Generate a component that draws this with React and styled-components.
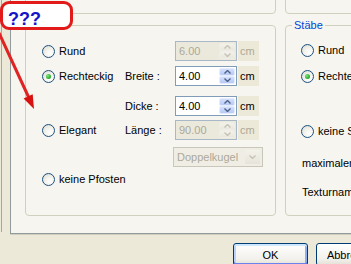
import React from "react";
import styled, { createGlobalStyle } from "styled-components";

const GlobalStyle = createGlobalStyle`
  html, body {
    margin: 0;
    padding: 0;
    background: #ece9d8;
  }
  body {
    font-family: "Liberation Sans", Arial, sans-serif;
    font-size: 11px;
    color: #000;
  }
`;

const PANEL = "#f6f5f0";

const Screen = styled.div`
  position: relative;
  width: 351px;
  height: 264px;
  overflow: hidden;
  background: #ece9d8;
`;

const Body = styled.div`
  display: flex;
  height: 234px;
`;

const SideEdge = styled.div`
  flex: none;
  width: 1px;
  height: 232px;
  border-right: 1px solid #a8a696;
  margin-right: 8px;
`;

const TabPage = styled.div`
  flex: 0 0 420px;
  box-sizing: border-box;
  height: 234px;
  padding-left: 14px;
  background: ${PANEL};
  border-left: 1px solid #919b9c;
  border-bottom: 1px solid #919b9c;
  box-shadow: 0 1px 0 #d0cebf;
  display: flex;
  flex-direction: column;
`;

const BoxRow = styled.div`
  display: flex;
  gap: 9px;
  margin-top: ${(p) => p.$top}px;
  height: ${(p) => p.$height}px;
  flex: none;
`;

const GroupBox = styled.div`
  box-sizing: border-box;
  width: ${(p) => p.$width}px;
  height: 100%;
  border: 1px solid #d0d0bf;
  border-radius: 4px;
  padding-left: ${(p) => p.$padLeft || 0}px;
  flex: none;
`;

const GroupTitle = styled.span`
  display: block;
  width: fit-content;
  margin: -7px 0 0 ${(p) => 6 - (p.$padLeft || 0)}px;
  padding: 0 2px;
  line-height: 13px;
  background: ${PANEL};
  color: #0046d5;
`;

const Row = styled.div`
  display: flex;
  align-items: center;
  height: 22px;
  margin-top: ${(p) => p.$top || 0}px;
  white-space: nowrap;
`;

const RadioCell = styled.label`
  display: flex;
  align-items: center;
  gap: 4px;
  width: ${(p) => (p.$width ? `${p.$width}px` : "auto")};
  flex: none;
`;

const RadioCircle = styled.span`
  box-sizing: border-box;
  width: 13px;
  height: 13px;
  flex: none;
  border: 1px solid #1c5180;
  border-radius: 50%;
  background: radial-gradient(circle at 65% 70%, #ffffff 0%, #f3f2ec 45%, #d6d5cc 100%);
  display: inline-flex;
  align-items: center;
  justify-content: center;

  &::after {
    content: "";
    display: ${(p) => (p.$checked ? "block" : "none")};
    width: 5px;
    height: 5px;
    border-radius: 50%;
    background: radial-gradient(circle at 35% 35%, #7ae87a, #21a121 75%);
  }
`;

const FieldLabel = styled.span`
  width: 50px;
  flex: none;
`;

const Spinner = styled.div`
  box-sizing: border-box;
  width: 62px;
  height: 20px;
  flex: none;
  display: flex;
  align-items: stretch;
  border: 1px solid ${(p) => (p.$disabled ? "#a9b8c9" : "#7f9db9")};
  background: ${(p) => (p.$disabled ? "#ebe9dc" : "#fff")};
  color: ${(p) => (p.$disabled ? "#aca899" : "#000")};
`;

const SpinValue = styled.span`
  flex: 1;
  padding-left: 3px;
  line-height: 18px;
`;

const SpinButtons = styled.div`
  width: 16px;
  display: flex;
  flex-direction: column;
  padding: 1px 1px 1px 0;
`;

const SpinHalf = styled.div`
  flex: 1;
  display: flex;
  align-items: center;
  justify-content: center;
  border-radius: 2px;
  border: 1px solid ${(p) => (p.$disabled ? "#efeee6" : "#e4ecfd")};
  background: ${(p) =>
    p.$disabled
      ? "linear-gradient(#f3f2ea, #e9e7dd)"
      : "linear-gradient(#d3dffc, #b7caf5)"};
`;

const Unit = styled.span`
  box-sizing: border-box;
  width: 21px;
  height: 20px;
  margin-left: 1px;
  padding-left: 2px;
  line-height: 20px;
  background: #ece9d8;
  color: ${(p) => (p.$disabled ? "#aca899" : "#000")};
`;

const Combo = styled.div`
  box-sizing: border-box;
  width: 90px;
  height: 20px;
  margin-left: -2px;
  display: flex;
  align-items: stretch;
  border: 1px solid #c9c7ba;
  background: #f0eee4;
  color: #aca899;
`;

const ComboText = styled.span`
  flex: 1;
  padding-left: 3px;
  line-height: 18px;
`;

const ComboButton = styled.div`
  width: 15px;
  margin: 1px;
  display: flex;
  align-items: center;
  justify-content: center;
  border-radius: 2px;
  border: 1px solid #efeee6;
  background: linear-gradient(#f3f2ea, #e6e4da);
`;

const Spacer = styled.span`
  width: ${(p) => p.$width}px;
  flex: none;
`;

const PlainText = styled.span`
  padding-left: 1px;
`;

const ButtonBar = styled.div`
  display: flex;
  gap: 8px;
  padding: 9px 0 0 233px;
`;

const Button = styled.button`
  box-sizing: border-box;
  width: 75px;
  height: 23px;
  flex: none;
  font-family: inherit;
  font-size: 11px;
  color: #000;
  border: 1px solid #003c74;
  border-radius: 3px;
  background: linear-gradient(#ffffff, #f2f1ec 70%, #e3e0d6);
  box-shadow: ${(p) =>
    p.$default
      ? "inset 0 2px 0 #cee7ff, inset 0 -2px 0 #6982ee, inset 2px 0 0 #b8d3fb, inset -2px 0 0 #8bb0f3"
      : "none"};
  padding: 0;
`;

const Callout = styled.div`
  position: absolute;
  left: 0;
  top: 1px;
  box-sizing: border-box;
  width: 73px;
  height: 29px;
  padding: 5px 0 0 5px;
  border: 3px solid #e21a1a;
  border-radius: 9px;
  background: #fff;
  font-weight: bold;
  font-size: 18px;
  line-height: 20px;
  color: #1414c8;
`;

const ArrowLayer = styled.svg`
  position: absolute;
  left: 0;
  top: 0;
`;

const Chevron = ({ up, disabled }) => (
  <svg width="7" height="4" viewBox="0 0 7 4">
    <path
      d={up ? "M0.5 3.5 L3.5 0.5 L6.5 3.5" : "M0.5 0.5 L3.5 3.5 L6.5 0.5"}
      fill="none"
      stroke={disabled ? "#c5c3b6" : "#4d6185"}
      strokeWidth="1.4"
    />
  </svg>
);

const SpinField = ({ value, disabled }) => (
  <>
    <Spinner $disabled={disabled}>
      <SpinValue>{value}</SpinValue>
      <SpinButtons>
        <SpinHalf $disabled={disabled}>
          <Chevron up disabled={disabled} />
        </SpinHalf>
        <SpinHalf $disabled={disabled}>
          <Chevron disabled={disabled} />
        </SpinHalf>
      </SpinButtons>
    </Spinner>
    <Unit $disabled={disabled}>cm</Unit>
  </>
);

const Radio = ({ label, checked, width }) => (
  <RadioCell $width={width}>
    <RadioCircle $checked={checked} />
    {label}
  </RadioCell>
);

export default function App() {
  return (
    <Screen>
      <GlobalStyle />
      <Body>
        <SideEdge />
        <TabPage>
          <BoxRow $top={-27} $height={41}>
            <GroupBox $width={251} />
            <GroupBox $width={150} />
          </BoxRow>
          <BoxRow $top={11} $height={191}>
            <GroupBox $width={251} $padLeft={16}>
              <Row $top={14}>
                <Radio label="Rund" width={83} />
                <Spacer $width={50} />
                <SpinField value="6.00" disabled />
              </Row>
              <Row $top={3}>
                <Radio label="Rechteckig" checked width={83} />
                <FieldLabel>Breite :</FieldLabel>
                <SpinField value="4.00" />
              </Row>
              <Row $top={8}>
                <Spacer $width={83} />
                <FieldLabel>Dicke :</FieldLabel>
                <SpinField value="4.00" />
              </Row>
              <Row $top={2}>
                <Radio label="Elegant" width={83} />
                <FieldLabel>Länge :</FieldLabel>
                <SpinField value="90.00" disabled />
              </Row>
              <Row $top={5}>
                <Spacer $width={133} />
                <Combo>
                  <ComboText>Doppelkugel</ComboText>
                  <ComboButton>
                    <Chevron disabled />
                  </ComboButton>
                </Combo>
              </Row>
              <Row>
                <Radio label="keine Pfosten" />
              </Row>
            </GroupBox>
            <GroupBox $width={150} $padLeft={15}>
              <GroupTitle $padLeft={15}>Stäbe</GroupTitle>
              <Row $top={7}>
                <Radio label="Rund" />
              </Row>
              <Row $top={4}>
                <Radio label="Rechteckig" checked />
              </Row>
              <Row $top={33}>
                <Radio label="keine Stäbe" />
              </Row>
              <Row $top={10}>
                <PlainText>maximaler Abstand</PlainText>
              </Row>
              <Row $top={7}>
                <PlainText>Texturname</PlainText>
              </Row>
            </GroupBox>
          </BoxRow>
        </TabPage>
      </Body>
      <ButtonBar>
        <Button $default>OK</Button>
        <Button>Abbrechen</Button>
      </ButtonBar>

      <ArrowLayer width="60" height="115" viewBox="0 0 60 115">
        <line x1="-1" y1="33" x2="29" y2="98" stroke="#e02424" strokeWidth="3" />
        <polygon points="34,109 23.6,98.4 32.7,94.2" fill="#d81010" />
      </ArrowLayer>
      <Callout>???</Callout>
    </Screen>
  );
}
